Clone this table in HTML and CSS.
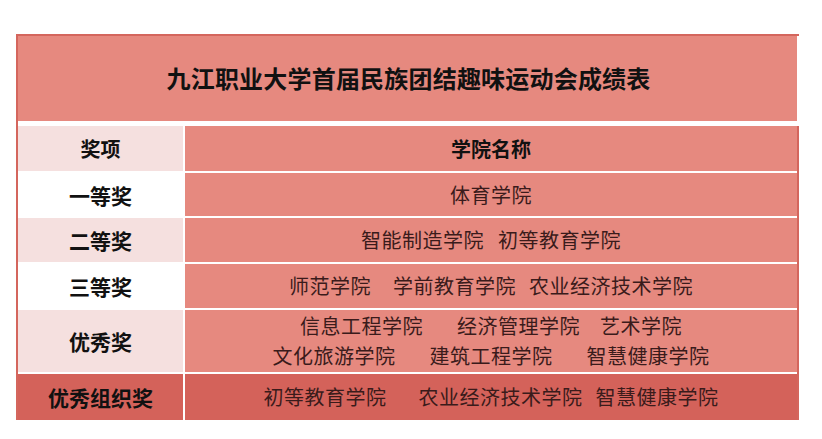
FILE: index.html
```html
<!DOCTYPE html>
<html lang="zh-CN">
<head>
<meta charset="utf-8">
<title>九江职业大学首届民族团结趣味运动会成绩表</title>
<link rel="stylesheet" href="styles.css">
</head>
<body>
<div class="sheet">
  <div class="title">九江职业大学首届民族团结趣味运动会成绩表</div>
  <div class="grid">
    <div class="cell award pink head">奖项</div>
    <div class="cell names-cell head-names">学院名称</div>

    <div class="cell award white r1">一等奖</div>
    <div class="cell names-cell r1"><div class="line"><span>体育学院</span></div></div>

    <div class="cell award pink r2">二等奖</div>
    <div class="cell names-cell r2"><div class="line"><span>智能制造学院</span><span class="g14">初等教育学院</span></div></div>

    <div class="cell award white r3">三等奖</div>
    <div class="cell names-cell r3"><div class="line"><span>师范学院</span><span class="g22">学前教育学院</span><span class="g13">农业经济技术学院</span></div></div>

    <div class="cell award pink r4">优秀奖</div>
    <div class="cell names-cell r4">
      <div class="line"><span>信息工程学院</span><span class="g34">经济管理学院</span><span class="g20">艺术学院</span></div>
      <div class="line"><span>文化旅游学院</span><span class="g34">建筑工程学院</span><span class="g34">智慧健康学院</span></div>
    </div>

    <div class="cell award dark r5">优秀组织奖</div>
    <div class="cell names-cell dark r5"><div class="line"><span>初等教育学院</span><span class="g32">农业经济技术学院</span><span class="g13">智慧健康学院</span></div></div>
  </div>
</div>
</body>
</html>
```

FILE: styles.css
```css
html, body {
  margin: 0;
  padding: 0;
  background: #ffffff;
}
body {
  font-family: "Noto Sans CJK SC", "Noto Sans", sans-serif;
}
.sheet {
  margin: 34px 0 0 16px;
  width: 783px;
  border-top: 2px solid #d4665d;
  border-left: 2px solid #d4665d;
  box-sizing: border-box;
}
.title {
  height: 85px;
  margin-right: 2px;
  background: #e6897f;
  display: flex;
  align-items: center;
  justify-content: center;
  font-size: 24px;
  font-weight: 700;
  letter-spacing: 0.2px;
  color: #111111;
  padding-bottom: 2px;
  padding-left: 2px;
  box-sizing: border-box;
}
.grid {
  margin-top: 5px;
  display: grid;
  grid-template-columns: 165px 612px;
  grid-template-rows: 45px 43px 44px 44px 62px 46px;
  column-gap: 2px;
  row-gap: 2px;
  border-right: 2px solid #d4665d;
  width: 781px;
  box-sizing: border-box;
}
.cell {
  display: flex;
  flex-direction: column;
  align-items: center;
  justify-content: center;
}
.award {
  font-size: 21px;
  font-weight: 700;
  color: #111111;
}
.award.head {
  font-size: 20px;
}
.pink {
  background: #f5e0df;
}
.white {
  background: #ffffff;
}
.names-cell {
  background: #e6897f;
  font-size: 20px;
  letter-spacing: 0.5px;
  color: #3a1b1b;
  line-height: 30px;
}
.head-names {
  font-weight: 700;
  color: #111111;
  letter-spacing: 0;
}
.dark {
  background: #d4625a;
}
.line {
  display: flex;
  justify-content: center;
  white-space: nowrap;
}
.g13 { margin-left: 13px; }
.g14 { margin-left: 14px; }
.g20 { margin-left: 20px; }
.g22 { margin-left: 22px; }
.g32 { margin-left: 32px; }
.g34 { margin-left: 34px; }
```
